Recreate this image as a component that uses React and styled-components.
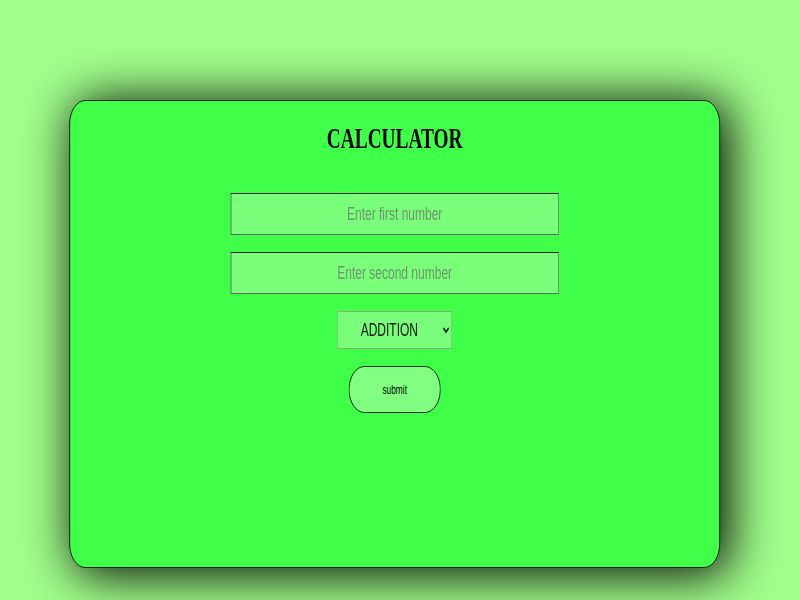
import { useState } from "react";
import styled, { createGlobalStyle } from "styled-components";

const OPERATIONS = ["ADDITION", "SUBTRACTION", "MULTIPLICATION", "DIVISION"];

const App = () => {
  const [first, setFirst] = useState("");
  const [second, setSecond] = useState("");
  const [op, setOp] = useState("ADDITION");

  return (
    <>
      <GlobalStyle />
      <Stage>
        <Card>
          <Title>CALCULATOR</Title>
          <Form onSubmit={(e) => e.preventDefault()}>
            <NumberInput
              type="text"
              placeholder="Enter first number"
              value={first}
              onChange={(e) => setFirst(e.target.value)}
            />
            <NumberInput
              type="text"
              placeholder="Enter second number"
              value={second}
              onChange={(e) => setSecond(e.target.value)}
            />
            <OpSelect value={op} onChange={(e) => setOp(e.target.value)}>
              {OPERATIONS.map((o) => (
                <option key={o} value={o}>
                  {o}
                </option>
              ))}
            </OpSelect>
            <SubmitButton type="submit">submit</SubmitButton>
          </Form>
        </Card>
      </Stage>
    </>
  );
};

const GlobalStyle = createGlobalStyle`
  html, body {
    margin: 0;
    height: 600px;
    overflow: hidden;
    background: #a1ff8b;
  }
`;

// the reference is a wide page squeezed into 800px, so lay out at 1200 and squash
const Stage = styled.div`
  width: 1200px;
  height: 600px;
  padding-top: 100px;
  box-sizing: border-box;
  transform: scaleX(0.6667);
  transform-origin: 0 0;
`;

const Card = styled.div`
  width: 976px;
  height: 468px;
  box-sizing: border-box;
  margin-left: 104px;
  padding-top: 21px;
  background: #40ff48;
  border: 1.5px solid #000;
  border-radius: 24px;
  box-shadow: 10px 4px 60px 4px rgba(0, 0, 0, 0.95);
  display: flex;
  flex-direction: column;
  align-items: center;
`;

const Title = styled.h1`
  margin: 0;
  font-family: "Liberation Serif", "Times New Roman", serif;
  font-weight: 700;
  font-size: 29px;
  line-height: 33px;
  color: #000;
`;

const Form = styled.form`
  margin-top: 38px;
  display: flex;
  flex-direction: column;
  align-items: center;
  gap: 17px;
`;

const NumberInput = styled.input`
  width: 492px;
  height: 42px;
  box-sizing: border-box;
  background: #79ff79;
  border: 1px solid #666;
  border-top-color: #222;
  border-left-color: #444;
  text-align: center;
  font-family: "Liberation Sans", Arial, sans-serif;
  font-size: 18px;
  color: #000;
  outline: none;

  &::placeholder {
    color: #6d946d;
  }
`;

const OpSelect = styled.select`
  width: 172px;
  height: 38px;
  box-sizing: border-box;
  background: #79ff79;
  border: 1px solid #7fae7f;
  border-radius: 0;
  padding: 0 8px 0 30px;
  font-family: "Liberation Sans", Arial, sans-serif;
  font-size: 18px;
  color: #111;
  outline: none;
`;

const SubmitButton = styled.button`
  width: 138px;
  height: 47px;
  box-sizing: border-box;
  background: #80ff80;
  border: 1.5px solid #000;
  border-radius: 24px;
  font-family: "Liberation Sans", Arial, sans-serif;
  font-size: 12.5px;
  color: #000;
  cursor: pointer;
`;

export default App;
